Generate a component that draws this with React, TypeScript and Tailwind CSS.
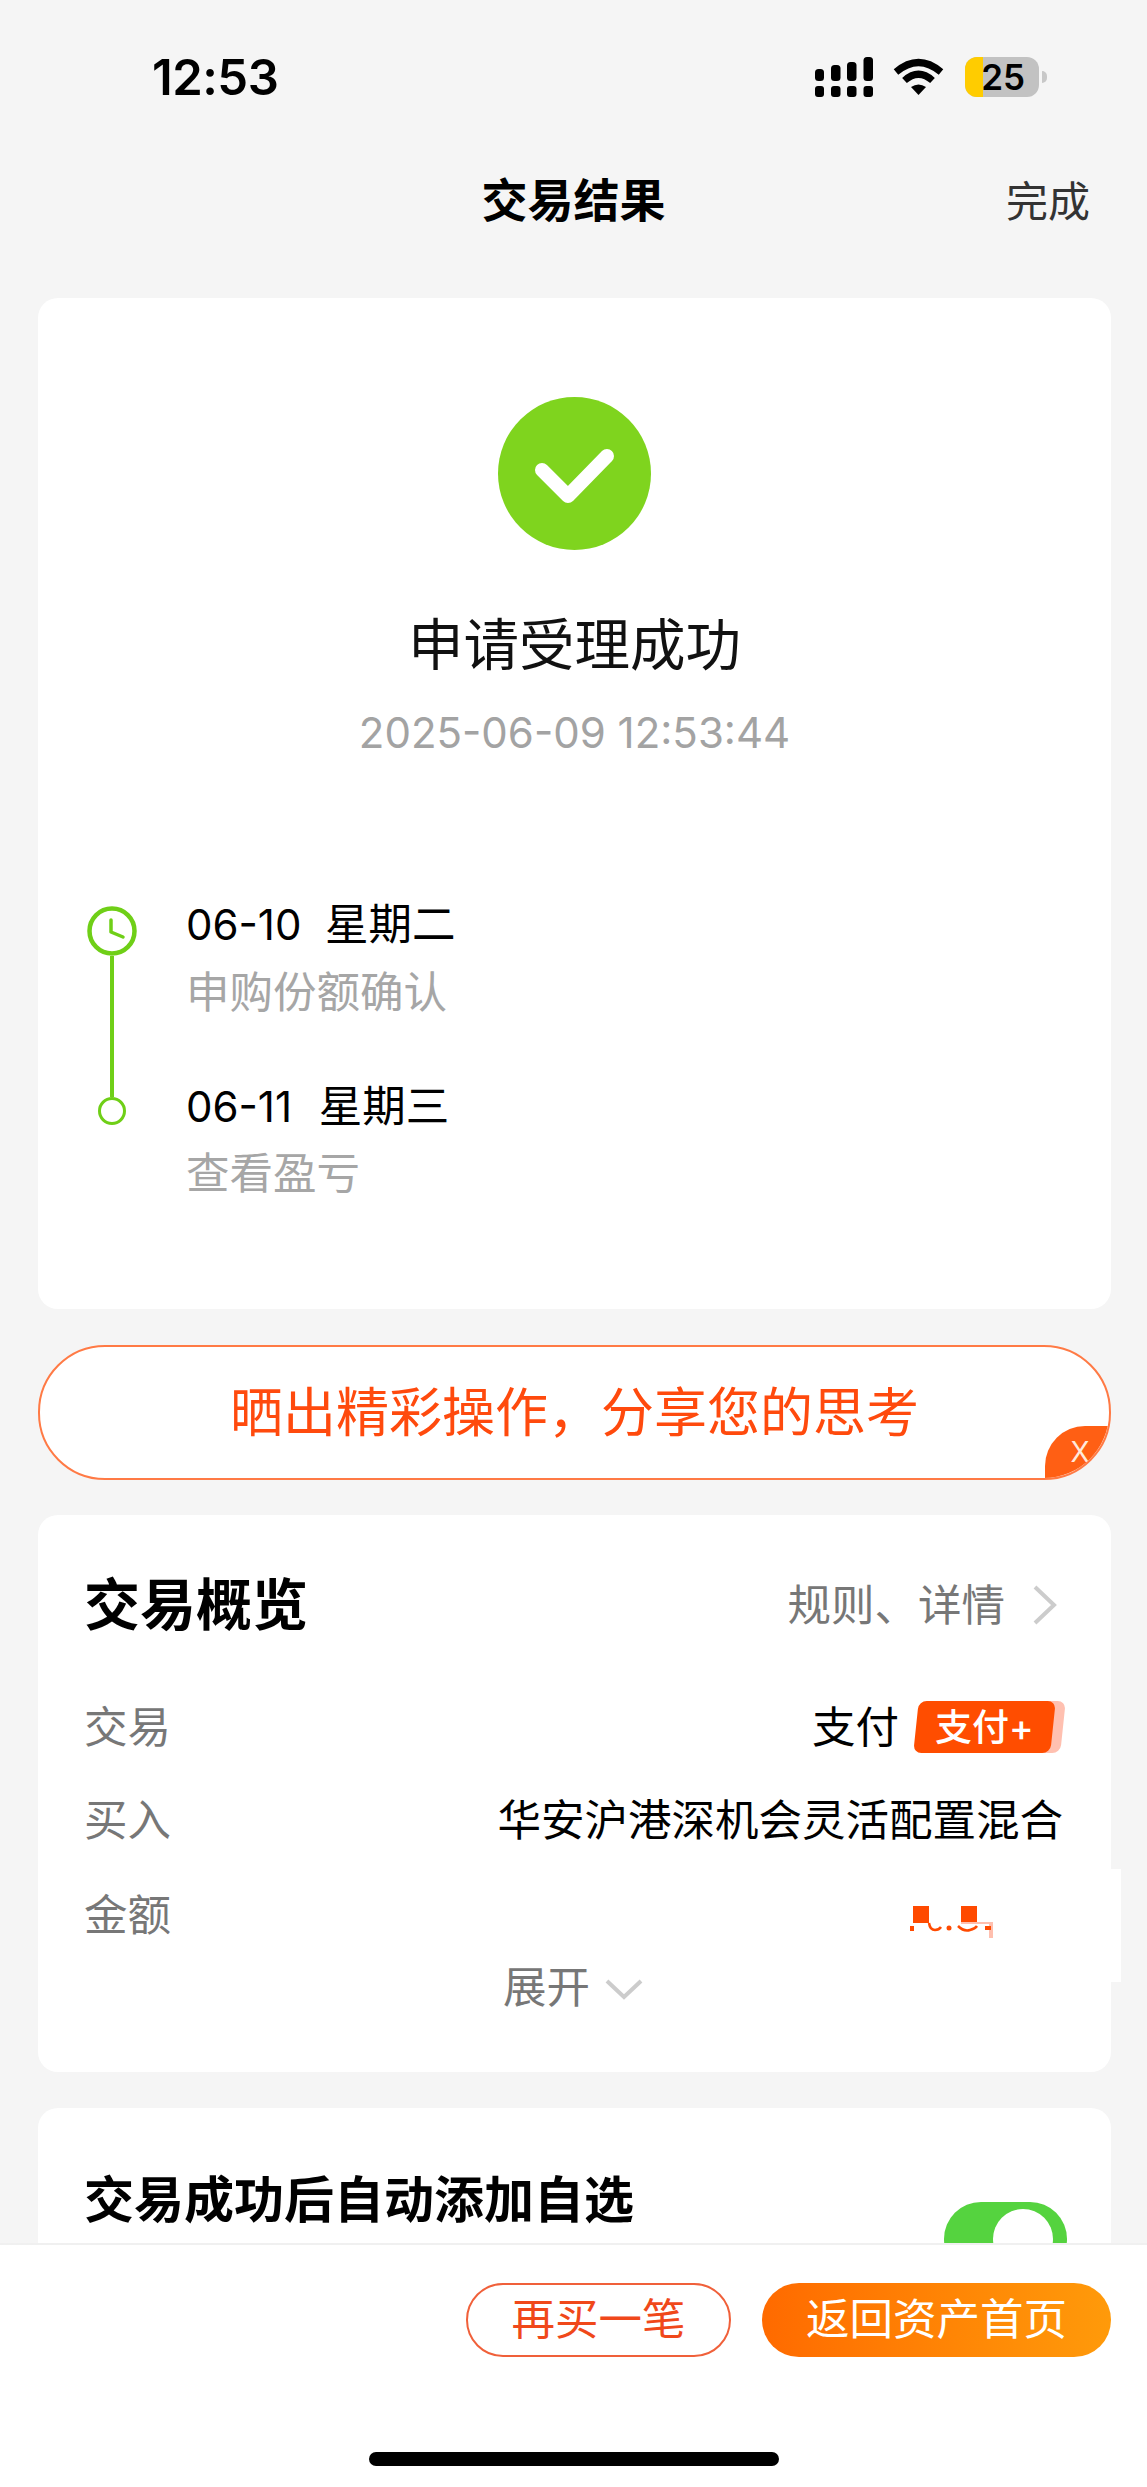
const font = "font-['Inter','Noto_Sans_CJK_SC',sans-serif]";

const StatusBar = () => (
  <div className="flex h-[156px] shrink-0 items-start justify-between pl-[152px] pr-[100px] pt-[57px]">
    <span className="text-[49px] font-semibold leading-[42px] tracking-[-0.5px] text-black">
      12:53
    </span>
    <div className="flex items-start">
      <svg width="58" height="40" viewBox="0 0 58 40" fill="#000">
        <rect x="0" y="12" width="9" height="12" rx="3.5" />
        <rect x="16" y="8" width="9.5" height="16" rx="3.5" />
        <rect x="32" y="5" width="9.5" height="19" rx="3.5" />
        <rect x="48.5" y="0" width="9.5" height="24" rx="3.5" />
        <rect x="0" y="29" width="9" height="11" rx="3" />
        <rect x="16" y="29" width="9.5" height="11" rx="3" />
        <rect x="32" y="29" width="9.5" height="11" rx="3" />
        <rect x="48.5" y="29" width="9.5" height="11" rx="3" />
      </svg>
      <svg className="ml-[20px] mt-px" width="51" height="37" viewBox="0 0 51 37" fill="none">
        <path d="M3 14Q25.5 -5 48 14" stroke="#000" strokeWidth="7" />
        <path d="M11.5 22.5Q25.5 10 39.5 22.5" stroke="#000" strokeWidth="7" />
        <path d="M18 29Q25.5 24 33 29L25.5 37Z" fill="#000" />
      </svg>
      <div className="relative ml-[21px] flex h-[40px] w-[74px] items-center justify-end rounded-[12px] bg-[#c2c2c2] pr-[14px]">
        <div className="absolute inset-y-0 left-0 w-[18px] rounded-l-[12px] bg-[#ffcc00]" />
        <span className="relative text-[35px] font-semibold leading-[40px] text-black">25</span>
      </div>
      <div className="ml-[3px] mt-[14px] h-[12px] w-[5px] rounded-r-full bg-[#c8c8c8]" />
    </div>
  </div>
);

const NavBar = () => (
  <div className="relative flex h-[88px] shrink-0 items-center justify-center">
    <span className="text-[46px] font-semibold leading-[60px] text-black">交易结果</span>
    <span className="absolute right-[57px] top-[16px] text-[42px] leading-[60px] text-[#333]">完成</span>
  </div>
);

const SuccessCard = () => (
  <div className="flex flex-col rounded-[20px] bg-white pb-[106px] pt-[99px]">
    <svg className="self-center" width="153" height="153" viewBox="0 0 153 153">
      <circle cx="76.5" cy="76.5" r="76.5" fill="#7fd41e" />
      <path d="M44 73L70 99L109 59" fill="none" stroke="#fff" strokeWidth="14" strokeLinecap="round" strokeLinejoin="round" />
    </svg>
    <div className="mt-[60px] text-center text-[55.5px] leading-[70px] text-[#111]">申请受理成功</div>
    <div className="mt-[23px] text-center text-[42px] leading-[60px] text-[#a3a3a3]">2025-06-09 12:53:44</div>
    <div className="ml-[49px] mt-[132px] flex items-start gap-[49px]">
      <div className="mt-[11px] flex h-[219px] w-[50px] flex-col items-center">
        <svg className="shrink-0" width="50" height="50" viewBox="0 0 50 50" fill="none" stroke="#6fcf17">
          <circle cx="25" cy="25" r="22.5" strokeWidth="4.5" />
          <path d="M24 14V26L36 31" strokeWidth="3.5" strokeLinecap="round" strokeLinejoin="round" />
        </svg>
        <div className="w-[4px] flex-1 bg-[#6fcf17]" />
        <div className="size-[28px] shrink-0 rounded-full border-[3px] border-[#6fcf17]" />
      </div>
      <div className="flex flex-col">
        <div className="h-[60px] whitespace-pre text-[42px] leading-[60px] text-black">
          06-10  <span className="text-[43.5px] leading-[56px]">星期二</span>
        </div>
        <div className="mt-[7px] h-[60px] text-[43.5px] leading-[60px] text-[#a6a6a6]">申购份额确认</div>
        <div className="mt-[55px] h-[60px] whitespace-pre text-[42px] leading-[60px] text-black">
          06-11  <span className="ml-[3px] text-[43.5px] leading-[56px]">星期三</span>
        </div>
        <div className="mt-[6px] h-[60px] text-[43.5px] leading-[60px] text-[#a6a6a6]">查看盈亏</div>
      </div>
    </div>
  </div>
);

const ShareBanner = () => (
  <div className="relative mt-[36px] flex h-[135px] items-center justify-center overflow-hidden rounded-[67px] border-2 border-[#ff7a45] bg-white">
    <span className="text-[53px] leading-[70px] text-[#ff4a0d]">晒出精彩操作，分享您的思考</span>
    <div className="absolute bottom-0 right-0 flex h-[52px] w-[64px] items-center justify-center rounded-tl-[40px] bg-[#ff5f14] pl-[6px] text-[28px] leading-none text-[#ffe9dc]">
      X
    </div>
  </div>
);

const PayBadge = () => (
  <div className="relative ml-[17px] h-[52px] w-[147px]">
    <div className="absolute inset-y-0 right-0 w-[60px] -skew-x-6 rounded-[8px] bg-[#ffc0b0]" />
    <div className="absolute inset-y-0 left-0 flex w-[137px] -skew-x-6 items-center justify-center rounded-[8px] bg-[#ff4d00]">
      <span className="skew-x-6 text-[37px] font-medium leading-none text-white">支付+</span>
    </div>
  </div>
);

const OverviewCard = () => (
  <div className="mt-[35px] flex flex-col rounded-[20px] bg-white pb-[55px] pl-[46px] pr-[48px] pt-[55px]">
    <div className="flex items-center justify-between">
      <span className="text-[56px] font-semibold leading-[70px] text-black">交易概览</span>
      <div className="flex items-center">
        <span className="text-[43.5px] leading-[60px] text-[#777]">规则、详情</span>
        <svg className="ml-[27px] mr-[6px]" width="25" height="42" viewBox="0 0 25 42" fill="none">
          <path d="M3 3L22 21L3 39" stroke="#ccc" strokeWidth="4" />
        </svg>
      </div>
    </div>
    <div className="mt-[57px] flex h-[60px] items-center justify-between text-[43.5px] leading-[60px]">
      <span className="text-[#777]">交易</span>
      <div className="flex items-center text-black">
        支付
        <PayBadge />
      </div>
    </div>
    <div className="mt-[33px] flex h-[60px] items-center justify-between text-[43.5px] leading-[60px]">
      <span className="text-[#777]">买入</span>
      <span className="text-black">华安沪港深机会灵活配置混合</span>
    </div>
    <div className="relative mt-[35px] flex h-[60px] items-center text-[43.5px] leading-[60px]">
      <span className="text-[#777]">金额</span>
      {/* redacted amount: white patch spills past the card edge */}
      <div className="absolute right-[-58px] top-[-16px] h-[113px] w-[240px] bg-white">
        <svg className="absolute left-[29px] top-[32px]" width="90" height="40" viewBox="0 0 90 40" fill="#ff4a00">
          <rect x="3" y="5" width="16" height="17" />
          <rect x="0" y="25" width="4" height="5" />
          <path d="M19 22Q20 29 25 29Q29 29 31 26" fill="none" stroke="#ff4a00" strokeWidth="2.5" />
          <circle cx="39" cy="27" r="2.5" />
          <rect x="51" y="5" width="16" height="17" />
          <path d="M48 25Q54 31 60 29Q65 28 67 25" fill="none" stroke="#ff4a00" strokeWidth="2.5" />
          <rect x="51" y="21" width="32" height="2" fill="#ffbfae" />
          <rect x="79" y="23" width="4" height="14" fill="#ffbfae" />
          <rect x="75" y="25" width="6" height="4" />
        </svg>
      </div>
    </div>
    <div className="mt-[12px] flex h-[60px] items-center pl-[419px]">
      <span className="text-[43.5px] leading-[60px] text-[#777]">展开</span>
      <svg className="ml-[15px] mt-[4px]" width="38" height="22" viewBox="0 0 38 22" fill="none">
        <path d="M2 3L19 19L36 3" stroke="#ccc" strokeWidth="4" />
      </svg>
    </div>
  </div>
);

const WatchlistCard = () => (
  <div className="mt-[36px] flex h-[240px] items-start justify-between rounded-[20px] bg-white pl-[46px] pr-[44px] pt-[57px]">
    <span className="text-[50px] font-semibold leading-[70px] text-black">交易成功后自动添加自选</span>
    <div className="mt-[37px] flex h-[74px] w-[123px] items-center justify-end rounded-full bg-[#55d33f] pr-[14px]">
      <div className="size-[60px] rounded-full bg-white" />
    </div>
  </div>
);

const BottomBar = () => (
  <div className="flex h-[244px] shrink-0 flex-col border-t-2 border-[#f0f0f0] bg-white">
    <div className="mt-[38px] flex justify-end gap-[31px] pr-[36px]">
      <button className="flex h-[74px] w-[265px] items-center justify-center rounded-full border-2 border-[#f0603a] text-[43.5px] leading-none text-[#f0481a]">
        再买一笔
      </button>
      <button className="flex h-[74px] w-[349px] items-center justify-center rounded-full bg-gradient-to-r from-[#ff6a00] to-[#ff9a0a] text-[43.5px] leading-none text-white">
        返回资产首页
      </button>
    </div>
    <div className="mx-auto mt-[95px] h-[14px] w-[410px] rounded-full bg-black" />
  </div>
);

export default function App() {
  return (
    <div className={`flex h-[2487px] w-full flex-col overflow-hidden bg-[#f5f5f5] ${font}`}>
      <StatusBar />
      <NavBar />
      <div className="min-h-0 flex-1 overflow-hidden pl-[38px] pr-[36px] pt-[54px]">
        <SuccessCard />
        <ShareBanner />
        <OverviewCard />
        <WatchlistCard />
      </div>
      <BottomBar />
    </div>
  );
}
